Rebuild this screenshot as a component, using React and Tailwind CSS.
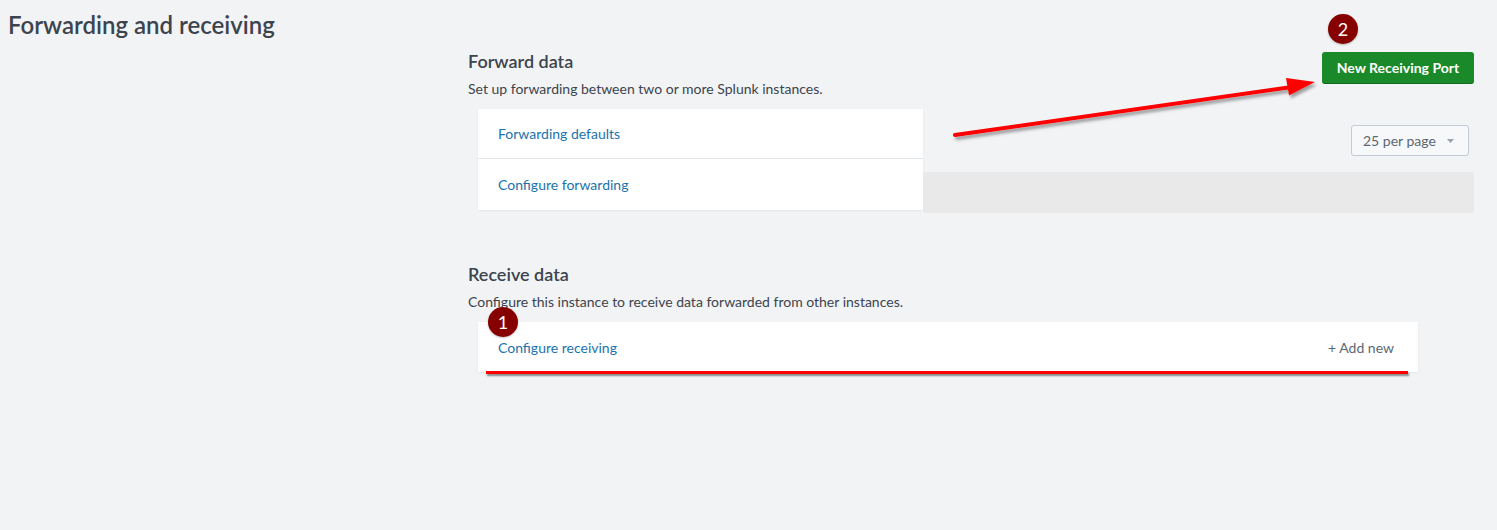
import React from 'react';

const LINK = 'text-[#1a73ad]';

function Badge({ n, className }) {
  return (
    <div className={`absolute w-[30px] h-[30px] rounded-full bg-[#870000] text-white text-[18px] leading-[30px] text-center shadow-[0_1px_2px_rgba(0,0,0,0.25)] ${className}`}>
      {n}
    </div>
  );
}

function Arrow() {
  return (
    <svg className="absolute inset-0 pointer-events-none" width="1497" height="530">
      <defs>
        <filter id="sh" x="-10%" y="-50%" width="120%" height="200%">
          <feDropShadow dx="2" dy="3" stdDeviation="1.5" floodColor="#555" floodOpacity="0.55" />
        </filter>
      </defs>
      <g filter="url(#sh)">
        <line x1="955" y1="135" x2="1292" y2="87" stroke="#ff0000" strokeWidth="4" strokeLinecap="round" />
        <polygon points="1315,82 1289,95.5 1286,78" fill="#ff0000" />
      </g>
    </svg>
  );
}

export default function App() {
  return (
    <div className="relative min-h-[530px] bg-[#f2f3f5] font-['Lato',sans-serif] text-[#3c444d]">
      <h1 className="pl-2 pt-[11px] text-[24px] leading-[28px] font-semibold">Forwarding and receiving</h1>

      <div className="ml-[468px] mr-[23px]">
        {/* Forward data */}
        <div className="flex mt-[10px]">
          <div className="w-[455px]">
            <h2 className="text-[18px] leading-[24px] font-semibold">Forward data</h2>
            <p className="mt-[6px] text-[14px] leading-[20px]">Set up forwarding between two or more Splunk instances.</p>
            <div className="mt-[10px] ml-[10px] bg-white shadow-[0_1px_2px_rgba(0,0,0,0.06)]">
              <div className={`h-[50px] flex items-center pl-[20px] text-[14px] border-b border-[#e1e4e8] ${LINK}`}>Forwarding defaults</div>
              <div className={`h-[51px] flex items-center pl-[20px] text-[14px] ${LINK}`}>Configure forwarding</div>
            </div>
          </div>
          <div className="flex-1 flex flex-col items-end pt-[3px]">
            <button className="h-[32px] w-[152px] rounded-[3px] bg-[#1a8929] border-b border-[#126b1e] text-white text-[14px] font-bold">
              New Receiving Port
            </button>
            <div className="mt-[41px] mr-[5px] h-[31px] w-[118px] rounded-[3px] border border-[#c3cbd4] bg-[#f7f8fa] flex items-center pl-[11px] pr-[14px] justify-between text-[14px] text-[#5c6773]">
              <span>25 per page</span>
              <svg width="7" height="4" viewBox="0 0 7 4"><polygon points="0,0 7,0 3.5,4" fill="#9aa4ae" /></svg>
            </div>
            <div className="mt-[16px] h-[41px] w-full rounded-[3px] bg-[#e9e9ea]" />
          </div>
        </div>

        {/* Receive data */}
        <h2 className="mt-[49px] text-[18px] leading-[24px] font-semibold">Receive data</h2>
        <p className="mt-[6px] text-[14px] leading-[20px]">Configure this instance to receive data forwarded from other instances.</p>
        <div className="relative mt-[10px] ml-[10px] w-[940px] h-[50px] bg-white flex items-center justify-between pl-[20px] pr-[24px] text-[14px] shadow-[0_1px_2px_rgba(0,0,0,0.06)]">
          <span className={LINK}>Configure receiving</span>
          <span className="text-[#5c6773]">+ Add new</span>
          <div className="absolute left-[8px] right-[10px] bottom-[-2px] h-[3px] bg-[#ff0000] shadow-[1px_2px_2px_rgba(0,0,0,0.45)]" />
          <Badge n="1" className="left-[10px] top-[-15px]" />
        </div>
      </div>

      <Arrow />
      <Badge n="2" className="left-[1328px] top-[14px]" />
    </div>
  );
}
